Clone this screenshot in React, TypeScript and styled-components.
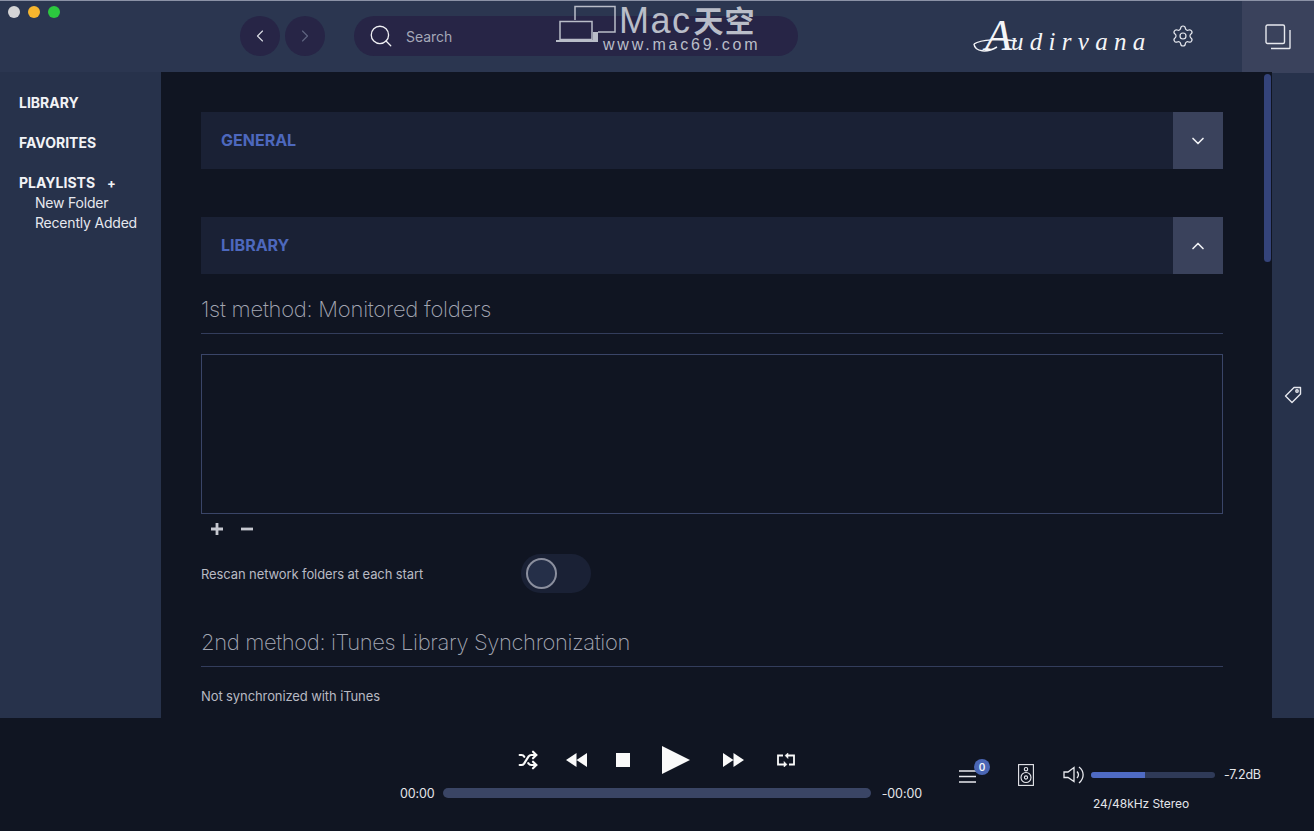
import React from "react";
import styled, { createGlobalStyle } from "styled-components";
import { ChevronLeft, ChevronRight, ChevronDown, ChevronUp, Search, Settings, Shuffle } from "lucide-react";

const Global = createGlobalStyle`
  html, body { margin: 0; padding: 0; background: #101522; overflow: hidden; }
  * { box-sizing: border-box; }
  body { font-family: Inter, "Noto Sans", sans-serif; }
`;

const Window = styled.div`
  position: relative;
  width: 1314px;
  height: 831px;
  display: flex;
  flex-direction: column;
  overflow: hidden;
  background: #101522;
`;

const TopBar = styled.header`
  position: relative;
  height: 72px;
  flex: none;
  display: flex;
  align-items: center;
  padding: 0 0 1px 240px;
  background: #2b3650;
  border-top: 1px solid #8b92a6;
`;

const Traffic = styled.div`
  position: absolute;
  left: 8px;
  top: 5px;
  display: flex;
  gap: 8px;
`;

const Light = styled.span<{ $c: string }>`
  width: 12px;
  height: 12px;
  border-radius: 50%;
  background: ${(p) => p.$c};
`;

const NavBtn = styled.button<{ $dim?: boolean }>`
  width: 40px;
  height: 40px;
  margin-right: 5px;
  padding: 0;
  border: 0;
  border-radius: 50%;
  display: flex;
  align-items: center;
  justify-content: center;
  background: #272546;
  color: ${(p) => (p.$dim ? "#5f6480" : "#d8dae2")};
`;

const SearchPill = styled.div`
  width: 444px;
  height: 40px;
  margin-left: 24px;
  padding-left: 14px;
  border-radius: 20px;
  display: flex;
  align-items: center;
  gap: 12px;
  background: #272546;
  color: #f0f0f4;
`;

const SearchLabel = styled.span`
  margin-top: 1px;
  font-size: 14px;
  letter-spacing: -0.05px;
  color: #a5a8b8;
`;

const LogoWrap = styled.div`
  position: relative;
  margin-left: 175px;
  width: 176px;
  height: 40px;
  display: flex;
  align-items: baseline;
  color: #f4f5f8;
  font-family: "Liberation Serif", serif;
  font-style: italic;
`;

const LogoCap = styled.span`
  font-size: 44px;
  line-height: 40px;
  margin-left: 12px;
`;

const LogoRest = styled.span`
  font-size: 25px;
  letter-spacing: 6.3px;
  line-height: 40px;
  margin-left: -1px;
  white-space: nowrap;
`;

const Swash = styled.svg`
  position: absolute;
  left: 0;
  top: 0;
`;

const GearBtn = styled.div`
  margin-left: 22px;
  width: 24px;
  display: flex;
  color: #e6e8ee;
`;

const WindowsBtn = styled.div`
  margin-left: auto;
  width: 72px;
  height: 72px;
  margin-bottom: -1px;
  display: flex;
  align-items: center;
  justify-content: center;
  background: #3a425c;
  color: #e6e8ee;
`;

const Watermark = styled.div`
  position: absolute;
  left: 556px;
  top: 4px;
  width: 206px;
  height: 48px;
  color: #b9bdc8;
  pointer-events: none;
`;

const WmIcon = styled.svg`
  position: absolute;
  left: 0;
  top: 0;
`;

const WmTitle = styled.div`
  position: absolute;
  left: 63px;
  top: 2px;
  height: 30px;
  display: flex;
  align-items: center;
  font-family: "Liberation Sans", "Noto Sans CJK SC", sans-serif;
  line-height: 30px;
  white-space: nowrap;
`;

const WmLatin = styled.span`
  margin-top: -2px;
  font-size: 36px;
  letter-spacing: 1.5px;
`;

const WmCjk = styled.span`
  font-size: 30px;
  font-weight: 700;
  letter-spacing: 1px;
  margin-left: 2px;
`;

const WmUrl = styled.div`
  position: absolute;
  left: 47px;
  top: 31px;
  font-family: "Liberation Sans", sans-serif;
  font-size: 16px;
  line-height: 18px;
  letter-spacing: 2.8px;
  white-space: nowrap;
`;

const Middle = styled.div`
  flex: 1;
  min-height: 0;
  display: flex;
`;

const Sidebar = styled.nav`
  width: 161px;
  flex: none;
  padding: 21px 0 0 19px;
  background: #27324b;
  color: #f2f3f6;
`;

const SideHead = styled.div<{ $last?: boolean }>`
  font-size: 14px;
  font-weight: 700;
  line-height: 20px;
  margin-bottom: ${(p) => (p.$last ? 0 : 20)}px;
  display: flex;
  align-items: center;
  gap: 12px;
`;

const Plus = styled.span`
  font-size: 13px;
  font-weight: 700;
`;

const SideItem = styled.div`
  padding-left: 16px;
  font-size: 14px;
  line-height: 20px;
  letter-spacing: -0.2px;
  color: #e6e8ee;
`;

const Main = styled.main`
  position: relative;
  flex: 1;
  min-width: 0;
  overflow: hidden;
  padding: 40px 49px 0 40px;
  background: #101522;
`;

const ScrollThumb = styled.div`
  position: absolute;
  top: 2px;
  right: 1px;
  width: 7px;
  height: 188px;
  border-radius: 4px;
  background: #34437a;
`;

const SectionBar = styled.div<{ $gap?: number }>`
  height: 57px;
  margin-bottom: ${(p) => p.$gap ?? 0}px;
  display: flex;
  align-items: center;
  justify-content: space-between;
  padding-left: 20px;
  background: #1a2135;
`;

const SectionTitle = styled.span`
  margin-top: -1px;
  font-size: 16px;
  font-weight: 700;
  color: #4d68bd;
`;

const Toggle = styled.div`
  width: 50px;
  height: 100%;
  padding-right: 1px;
  display: flex;
  align-items: center;
  justify-content: center;
  background: #3a425c;
  color: #f0f1f5;
`;

const MethodTitle = styled.h2`
  margin: 0;
  height: 60px;
  display: flex;
  align-items: center;
  padding-top: 10px;
  font-size: 22px;
  font-weight: 200;
  letter-spacing: -0.25px;
  color: #a3a6b2;
  border-bottom: 1px solid #333d5c;
`;

const FolderBox = styled.div`
  height: 160px;
  margin-top: 20px;
  border: 1px solid #3a4568;
`;

const PlusMinus = styled.div`
  display: flex;
  gap: 16px;
  height: 30px;
  padding-left: 9px;
  align-items: center;
  color: #c6c8d0;
`;

const SettingRow = styled.div`
  margin-top: 10px;
  height: 39px;
  display: flex;
  align-items: center;
`;

const SettingLabel = styled.span`
  width: 320px;
  font-size: 13px;
  letter-spacing: -0.1px;
  color: #b8bac3;
`;

const Switch = styled.div`
  width: 70px;
  height: 39px;
  border-radius: 20px;
  padding: 4px 5px;
  background: #1a2135;
`;

const Knob = styled.div`
  width: 31px;
  height: 31px;
  border-radius: 50%;
  border: 2px solid #8b8f9e;
  background: #252f48;
`;

const SecondTitle = styled(MethodTitle)`
  margin-top: 16px;
  height: 58px;
  padding-top: 9px;
  letter-spacing: -0.38px;
`;

const Note = styled.p`
  margin: 20px 0 0;
  font-size: 13px;
  line-height: 18px;
  letter-spacing: -0.1px;
  color: #b8bac3;
`;

const Rail = styled.aside`
  width: 42px;
  flex: none;
  display: flex;
  align-items: center;
  justify-content: center;
  background: #27324b;
  color: #e6e8ee;
`;

const Player = styled.footer`
  height: 113px;
  flex: none;
  display: flex;
  background: #101522;
  color: #e6e8ee;
`;

const Transport = styled.div`
  margin-left: 400px;
  width: 522px;
  padding-top: 26px;
`;

const Buttons = styled.div`
  display: flex;
  align-items: center;
  height: 32px;
  padding-left: 118px;
`;

const Ctl = styled.span<{ $ml?: number }>`
  display: flex;
  margin-left: ${(p) => p.$ml ?? 0}px;
  color: #fafafa;
`;

const Progress = styled.div`
  margin-top: 12px;
  display: flex;
  align-items: center;
  justify-content: space-between;
  height: 10px;
`;

const Time = styled.span`
  font-size: 12.5px;
  letter-spacing: -0.1px;
  color: #e4e5ea;
`;

const Track = styled.div`
  width: 428px;
  height: 10px;
  margin: 0 1px 0 -1px;
  border-radius: 5px;
  background: #3a4565;
`;

const Output = styled.div`
  margin-left: 37px;
  width: 305px;
  position: relative;
  padding-top: 46px;
  display: flex;
  align-items: flex-start;
`;

const Queue = styled.div`
  position: relative;
  width: 17px;
  height: 20px;
  margin-top: 2px;
  color: #e8e9ee;
`;

const Badge = styled.span`
  position: absolute;
  left: 15px;
  top: -7px;
  width: 16px;
  height: 16px;
  border-radius: 50%;
  background: #4a66b5;
  color: #f4f5f8;
  font-size: 10px;
  font-weight: 600;
  line-height: 16px;
  text-align: center;
`;

const SpeakerIcon = styled.span`
  display: flex;
  margin-left: 42px;
  color: #e8e9ee;
`;

const VolumeIcon = styled.span`
  display: flex;
  margin-left: 29px;
  margin-top: 2px;
  color: #e8e9ee;
`;

const VolumeTrack = styled.div`
  width: 124px;
  height: 6px;
  margin: 8px 0 0 6px;
  border-radius: 3px;
  background: #2f3a58;
  overflow: hidden;
`;

const VolumeFill = styled.div`
  height: 100%;
  background: #4f6bc4;
`;

const Db = styled.span`
  margin-left: 9px;
  font-size: 12.5px;
  letter-spacing: -0.2px;
  line-height: 20px;
  margin-top: 1px;
  color: #e4e5ea;
`;

const Format = styled.span`
  position: absolute;
  left: 134px;
  top: 78px;
  font-size: 12px;
  line-height: 16px;
  letter-spacing: -0.05px;
  color: #e4e5ea;
`;

const filled = { fill: "currentColor" };

export default function App() {
  const volume = (54 / 124) * 100;
  return (
    <Window>
      <Global />
      <TopBar>
        <Traffic>
          <Light $c="#d4d4d6" />
          <Light $c="#f6b52e" />
          <Light $c="#2cc83f" />
        </Traffic>
        <NavBtn><ChevronLeft size={20} strokeWidth={1.4} /></NavBtn>
        <NavBtn $dim><ChevronRight size={20} strokeWidth={1.4} /></NavBtn>
        <SearchPill>
          <Search size={26} strokeWidth={1.2} />
          <SearchLabel>Search</SearchLabel>
        </SearchPill>
        <LogoWrap>
          <Swash width="176" height="40" viewBox="0 0 176 40" fill="none" stroke="#f4f5f8" strokeWidth="1.5">
            <path d="M1 28 C8 23 28 23 44 25 M1 28 C2 36 14 37 24 31" />
          </Swash>
          <LogoCap>A</LogoCap>
          <LogoRest>udirvana</LogoRest>
        </LogoWrap>
        <GearBtn><Settings size={24} strokeWidth={1.2} /></GearBtn>
        <WindowsBtn>
          <svg width="26" height="26" viewBox="0 0 26 26" fill="none" stroke="currentColor" strokeWidth="1.4">
            <rect x="1" y="1" width="18.5" height="18.5" rx="1.5" />
            <path d="M6 24.5 H24.2 a0.8 0.8 0 0 0 0.8 -0.8 V6" />
          </svg>
        </WindowsBtn>
        <Watermark>
          <WmIcon width="64" height="46" viewBox="0 0 64 46" fill="none" stroke="currentColor" strokeWidth="1.5">
            <path d="M19 15 V1.5 H59 V27 H42" />
            <rect x="4" y="16.5" width="32" height="18" />
            <path d="M0 36 H40" strokeWidth="2" />
            <rect x="37" y="27" width="5" height="10" fill="currentColor" stroke="none" />
          </WmIcon>
          <WmTitle>
            <WmLatin>Mac</WmLatin>
            <WmCjk>天空</WmCjk>
          </WmTitle>
          <WmUrl>www.mac69.com</WmUrl>
        </Watermark>
      </TopBar>
      <Middle>
        <Sidebar>
          <SideHead>LIBRARY</SideHead>
          <SideHead>FAVORITES</SideHead>
          <SideHead $last>PLAYLISTS <Plus>+</Plus></SideHead>
          <SideItem>New Folder</SideItem>
          <SideItem>Recently Added</SideItem>
        </Sidebar>
        <Main>
          <ScrollThumb />
          <SectionBar $gap={48}>
            <SectionTitle>GENERAL</SectionTitle>
            <Toggle><ChevronDown size={20} strokeWidth={2} /></Toggle>
          </SectionBar>
          <SectionBar>
            <SectionTitle>LIBRARY</SectionTitle>
            <Toggle><ChevronUp size={20} strokeWidth={2} /></Toggle>
          </SectionBar>
          <MethodTitle>1st method: Monitored folders</MethodTitle>
          <FolderBox />
          <PlusMinus>
            <svg width="14" height="14" viewBox="0 0 14 14"><path d="M7 1 V13 M1 7 H13" stroke="currentColor" strokeWidth="2.8" /></svg>
            <svg width="14" height="14" viewBox="0 0 14 14"><path d="M1 7 H13" stroke="currentColor" strokeWidth="2.8" /></svg>
          </PlusMinus>
          <SettingRow>
            <SettingLabel>Rescan network folders at each start</SettingLabel>
            <Switch><Knob /></Switch>
          </SettingRow>
          <SecondTitle>2nd method: iTunes Library Synchronization</SecondTitle>
          <Note>Not synchronized with iTunes</Note>
        </Main>
        <Rail>
          <svg width="18" height="18" viewBox="0 0 18 18" fill="none" stroke="currentColor" strokeWidth="1.4" strokeLinejoin="round">
            <path d="M10 1.5 H16.5 V8 L8 16.5 L1.5 10 Z" />
            <circle cx="13" cy="5" r="1.2" />
          </svg>
        </Rail>
      </Middle>
      <Player>
        <Transport>
          <Buttons>
            <Ctl><Shuffle size={20} strokeWidth={2.6} /></Ctl>
            <Ctl $ml={28}>
              <svg width="21" height="14" viewBox="0 0 21 14" style={filled}><path d="M10.5 0 V14 L0 7 Z M21 0 V14 L10.5 7 Z" /></svg>
            </Ctl>
            <Ctl $ml={29}>
              <svg width="14" height="14" viewBox="0 0 14 14" style={filled}><rect width="14" height="14" /></svg>
            </Ctl>
            <Ctl $ml={32}>
              <svg width="28" height="28" viewBox="0 0 28 28" style={filled}><path d="M0 0 L28 14 L0 28 Z" /></svg>
            </Ctl>
            <Ctl $ml={33}>
              <svg width="21" height="14" viewBox="0 0 21 14" style={filled}><path d="M0 0 L10.5 7 L0 14 Z M10.5 0 L21 7 L10.5 14 Z" /></svg>
            </Ctl>
            <Ctl $ml={33}>
              <svg width="18" height="14" viewBox="0 0 18 14" fill="none" stroke="currentColor" strokeWidth="1.8">
                <path d="M6 2.5 H1 V11.5 H7 M12 11.5 H17 V2.5 H11" />
                <path d="M7 8.5 L10 11.5 L7 14 Z M11 0 L8 2.5 L11 5.5 Z" fill="currentColor" strokeWidth="0.5" />
              </svg>
            </Ctl>
          </Buttons>
          <Progress>
            <Time>00:00</Time>
            <Track />
            <Time>-00:00</Time>
          </Progress>
        </Transport>
        <Output>
          <Queue>
            <svg width="17" height="20" viewBox="0 0 17 20" stroke="currentColor" strokeWidth="1.7"><path d="M0 5 H17 M0 10.5 H17 M0 16 H17" /></svg>
            <Badge>0</Badge>
          </Queue>
          <SpeakerIcon>
            <svg width="16" height="22" viewBox="0 0 16 22" fill="none" stroke="currentColor" strokeWidth="1.1">
              <rect x="0.6" y="0.6" width="14.8" height="20.8" />
              <circle cx="8" cy="5.2" r="1.7" />
              <circle cx="8" cy="13.5" r="5" />
              <circle cx="8" cy="13.5" r="1.6" />
            </svg>
          </SpeakerIcon>
          <VolumeIcon>
            <svg width="22" height="18" viewBox="0 0 22 18" fill="none" stroke="currentColor" strokeWidth="1.3">
              <path d="M1 6 H5 L11 1.5 V15.5 L5 11.5 H1 Z" />
              <path d="M14 5.5 C15.8 7.5 15.8 10 14 12" />
              <path d="M16 1 C21.5 5 21.5 12.5 16 17" />
            </svg>
          </VolumeIcon>
          <VolumeTrack><VolumeFill style={{ width: `${volume}%` }} /></VolumeTrack>
          <Db>-7.2dB</Db>
          <Format>24/48kHz Stereo</Format>
        </Output>
      </Player>
    </Window>
  );
}
